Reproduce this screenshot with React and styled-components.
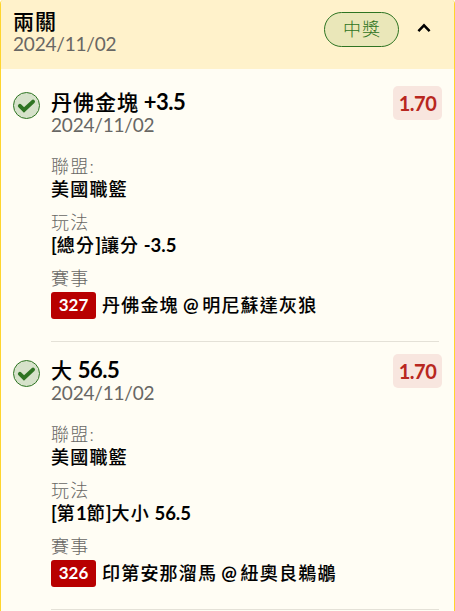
import React from "react";
import styled, { createGlobalStyle } from "styled-components";

const Global = createGlobalStyle`
  * { box-sizing: border-box; }
  body { margin: 0; background: #fffdf4; overflow: hidden; }
`;

const Card = styled.main`
  width: 455px;
  height: 611px;
  overflow: hidden;
  border-left: 1px solid #ffd52e;
  border-right: 1px solid #ffd52e;
  border-radius: 4px 4px 0 0;
  background: #fffdf4;
  color: #000;
  font-family: Lato, "Noto Sans CJK TC", sans-serif;
`;

const Header = styled.header`
  display: flex;
  align-items: flex-start;
  height: 69px;
  padding: 9px 21px 0 12px;
  background: #fff2cb;
`;

const HeaderText = styled.div`
  flex: 1;
`;

const Title = styled.h2`
  margin: 0;
  height: 24px;
  font-size: 22px;
  line-height: 23px;
  font-weight: 700;
  letter-spacing: -0.5px;
  white-space: pre;
`;

const Han = styled.span`
  font-size: ${(p) => (p.$title ? "21px" : "18px")};
  font-weight: 500;
  letter-spacing: ${(p) => (p.$title ? "1px" : "1.2px")};
  -webkit-text-stroke: 0.1px currentColor;
`;

const DateLine = styled.div`
  height: 22px;
  font-size: 19px;
  line-height: 22px;
  letter-spacing: -0.2px;
  color: #686764;
`;

const Pill = styled.span`
  display: flex;
  align-items: center;
  justify-content: center;
  width: 75px;
  height: 35px;
  margin: 3px 16px 0 0;
  padding: 0 0 4px 1px;
  border: 1px solid #2e7422;
  border-radius: 18px;
  background: #eae7b9;
  color: #2e7422;
  font-size: 18px;
  font-weight: 300;
  letter-spacing: 1px;
`;

const Chevron = styled.svg`
  width: 18px;
  height: 18px;
  margin-top: 10px;
`;

const Leg = styled.section`
  display: flex;
  height: 268px;
  padding: 16px 12px 0 12px;
`;

const Check = styled.svg`
  flex: none;
  width: 27px;
  height: 27px;
  margin: 7px 11px 0 0;
`;

const Content = styled.div`
  flex: 1;
  height: 257px;
  margin-right: 3px;
  border-bottom: 1px solid #e4e1d7;
`;

const Top = styled.div`
  display: flex;
  justify-content: space-between;
  height: 65px;
  margin-right: -3px;
`;

const Heading = styled.div`
  padding-top: 5px;
`;

const Odds = styled.span`
  width: 49px;
  height: 34px;
  margin-top: 1px;
  border-radius: 5px;
  background: #f8e6df;
  color: #b82720;
  font-size: 20px;
  font-weight: 700;
  line-height: 35px;
  letter-spacing: -0.5px;
  text-align: center;
`;

const Field = styled.div`
  height: 56px;
  padding-top: 4px;
`;

const Label = styled.div`
  height: 23px;
  color: #686764;
  font-size: 18px;
  font-weight: 300;
  line-height: 24px;
  letter-spacing: 1.2px;
`;

const Value = styled.div`
  height: 24px;
  font-size: 18.5px;
  font-weight: 700;
  line-height: 24px;
  letter-spacing: -0.05px;
  white-space: pre;
`;

const MatchRow = styled(Value)`
  display: flex;
  height: 27px;
  margin-top: 3px;
  line-height: 26px;
  letter-spacing: -0.4px;
`;

const Game = styled.span`
  width: 45px;
  height: 27px;
  margin-right: 6px;
  border-radius: 3px;
  background: #b80000;
  color: #fff;
  font-size: 17px;
  font-weight: 700;
  line-height: 26px;
  letter-spacing: 0;
  text-align: center;
`;

/* Splits a string into Han and Latin runs, which carry different weights. */
function Mixed({ text, title }) {
  return text.split(/([\u4e00-\u9fff]+)/).map((run, i) =>
    i % 2 ? <Han key={i} $title={title}>{run}</Han> : run
  );
}

const legs = [
  { pick: "丹佛金塊 +3.5", market: "[總分]讓分 -3.5", game: "327", match: "丹佛金塊 @ 明尼蘇達灰狼" },
  { pick: "大 56.5", market: "[第1節]大小 56.5", game: "326", match: "印第安那溜馬 @ 紐奧良鵜鶘" },
];

export default function App() {
  return (
    <>
      <Global />
      <Card>
        <Header>
          <HeaderText>
            <Title><Mixed title text="兩關" /></Title>
            <DateLine>2024/11/02</DateLine>
          </HeaderText>
          <Pill>中獎</Pill>
          <Chevron viewBox="0 0 18 18" fill="none">
            <path d="M3.4 12.1 9 6.4l5.6 5.7" stroke="#000" strokeWidth="2.5" />
          </Chevron>
        </Header>
        {legs.map((leg) => (
          <Leg key={leg.game}>
            <Check viewBox="0 0 27 27" fill="none">
              <circle cx="13.5" cy="13.5" r="13" fill="#d6e2ca" stroke="#2e7422" />
              <path d="m6.9 13.9 4.1 4 9-8.3" stroke="#2e7422" strokeWidth="4" strokeLinecap="round" strokeLinejoin="miter" />
            </Check>
            <Content>
              <Top>
                <Heading>
                  <Title><Mixed title text={leg.pick} /></Title>
                  <DateLine>2024/11/02</DateLine>
                </Heading>
                <Odds>1.70</Odds>
              </Top>
              <Field><Label>聯盟:</Label><Value><Mixed text="美國職籃" /></Value></Field>
              <Field><Label>玩法</Label><Value><Mixed text={leg.market} /></Value></Field>
              <Field>
                <Label>賽事</Label>
                <MatchRow><Game>{leg.game}</Game><span><Mixed text={leg.match} /></span></MatchRow>
              </Field>
            </Content>
          </Leg>
        ))}
      </Card>
    </>
  );
}
